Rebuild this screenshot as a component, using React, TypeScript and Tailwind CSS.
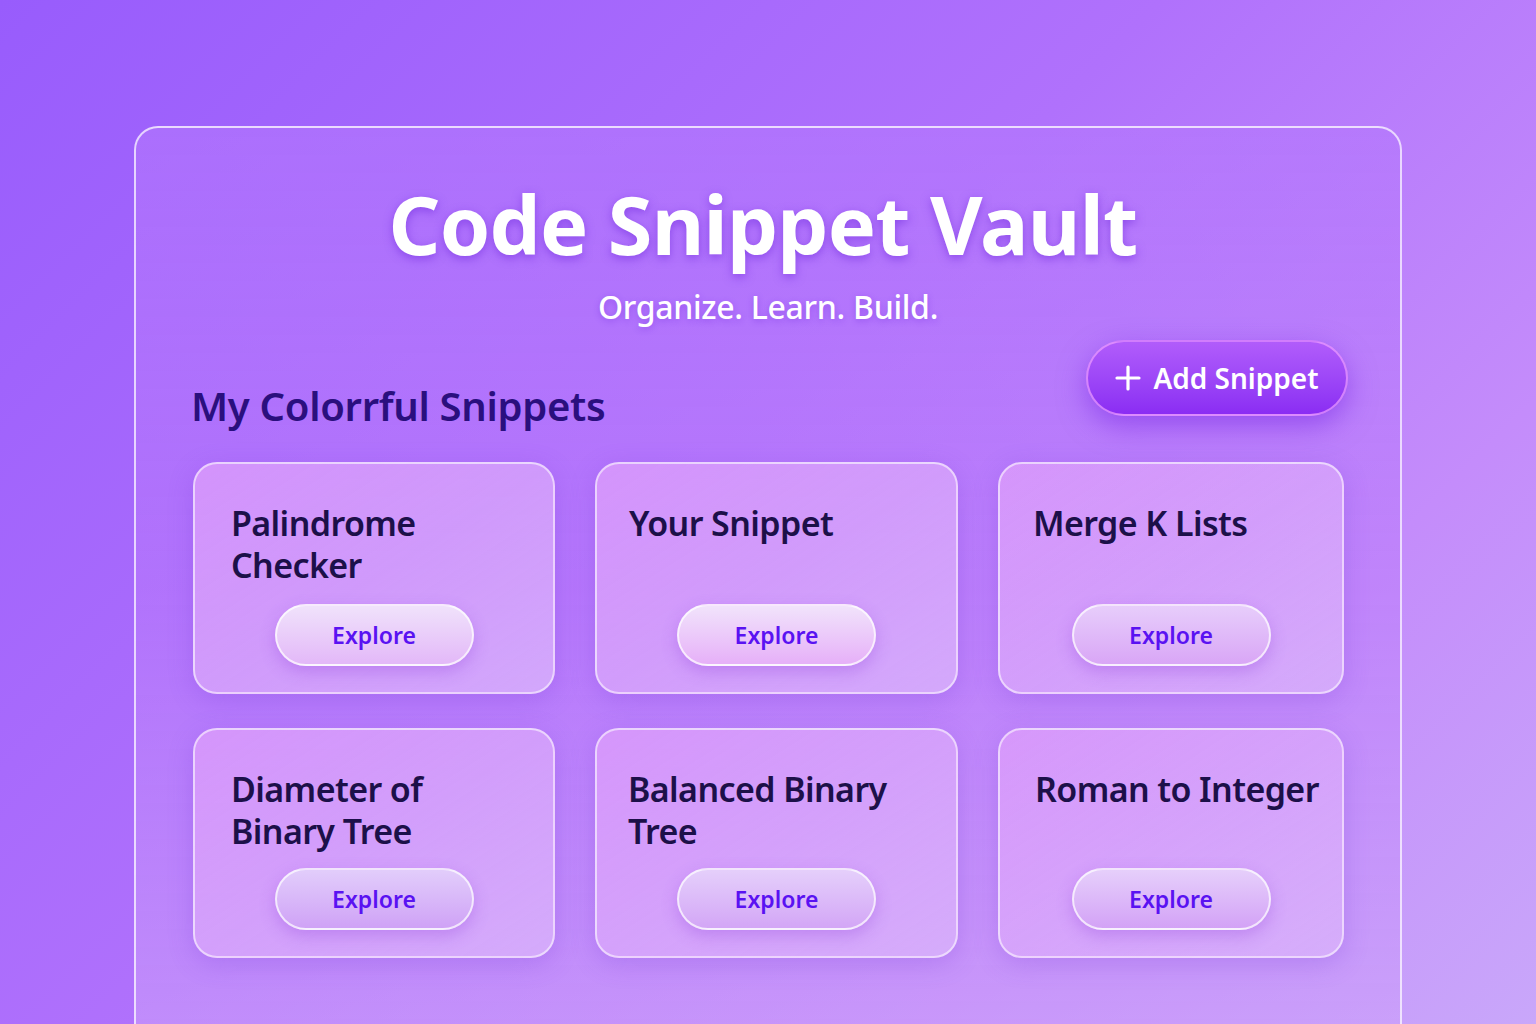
import React from "react";

const cards = [
  { lines: ["Palindrome", "Checker"], pl: "pl-[36px]", btn: "from-[#f0e2fb] to-[#e3b8f8]" },
  { lines: ["Your Snippet"], pl: "pl-[32px]", btn: "from-[#f1e3fb] to-[#e6b0f8]" },
  { lines: ["Merge K Lists"], pl: "pl-[33px]", btn: "from-[#e7cdfb] to-[#d9a6f6]" },
  { lines: ["Diameter of", "Binary Tree"], pl: "pl-[36px]", btn: "from-[#e2cdfb] to-[#cfa2f6]" },
  { lines: ["Balanced Binary", "Tree"], pl: "pl-[31px]", btn: "from-[#e5cffb] to-[#d3a6f6]" },
  { lines: ["Roman to Integer"], pl: "pl-[35px]", btn: "from-[#e6cffb] to-[#d3a2f6]" },
];

function Card({ c, top }: { c: (typeof cards)[number]; top: boolean }) {
  return (
    <div
      className={`relative flex flex-col rounded-[24px] border-2 border-white/55 bg-gradient-to-br from-[#dc9cfb]/80 via-[#dcaafb]/70 to-[#d9b2fb]/80 shadow-[0_6px_24px_rgba(120,60,220,0.25)] ${top ? "h-[232px]" : "h-[230px]"} ${c.pl} pr-[10px] pt-[38px]`}
    >
      <div className="whitespace-nowrap text-[34px] leading-[42px] font-semibold text-[#1c1049] tracking-[-0.6px]">
        {c.lines.map((l) => (
          <div key={l}>{l}</div>
        ))}
      </div>
      <div className="absolute left-0 right-0 bottom-[26px] flex justify-center">
        <button
          className={`h-[62px] w-[199px] rounded-full border-2 border-white/70 bg-gradient-to-b ${c.btn} text-[23px] font-semibold text-[#5a12f2] shadow-[0_6px_16px_rgba(140,60,220,0.3)]`}
        >
          Explore
        </button>
      </div>
    </div>
  );
}

export default function App() {
  return (
    <div
      className="min-h-[1024px] w-full overflow-hidden bg-[linear-gradient(135deg,#985cfc_0%,#b071fc_45%,#c48cfb_75%,#c9a8fa_100%)] pt-[126px]"
      style={{ fontFamily: '"Noto Sans", "Open Sans", sans-serif' }}
    >
      <div className="mx-[134px] h-[920px] rounded-t-[24px] border-2 border-b-0 border-white/70 bg-gradient-to-b from-[#b478fd]/60 via-[#bb7cfb]/50 to-[#cca0fa]/60 pt-[47px]">
        <h1 className="pr-[10px] text-center text-[81px] font-bold leading-[1.2] tracking-[-0.8px] text-white [text-shadow:0_3px_10px_rgba(110,40,220,0.55)]">
          Code Snippet Vault
        </h1>
        <p className="mt-[15px] text-center text-[32px] leading-[40px] font-medium text-white tracking-[-0.3px] [text-shadow:0_2px_6px_rgba(110,40,220,0.4)]">
          Organize. Learn. Build.
        </p>
        <div className="mt-[13px] flex items-start justify-between pl-[55px] pr-[52px]">
          <h2 className="mt-[40px] text-[40px] font-semibold leading-[52px] text-[#2a0f7e] tracking-[-0.3px]">
            My Colorrful Snippets
          </h2>
          <button className="flex h-[76px] w-[262px] items-center justify-center gap-[12px] rounded-full border-2 border-[#f0a0ff]/70 bg-gradient-to-b from-[#b15cfb] to-[#8b2cf3] text-[28px] font-semibold text-white shadow-[0_10px_28px_rgba(120,40,230,0.55)]">
            <svg width="26" height="26" viewBox="0 0 26 26" fill="none" stroke="white" strokeWidth="3.2" strokeLinecap="round">
              <path d="M13 2v22M2 13h22" />
            </svg>
            Add Snippet
          </button>
        </div>
        <div className="mt-[30px] grid grid-cols-[362px_363px_346px] gap-x-[40px] gap-y-[34px] pl-[57px]">
          {cards.map((c, i) => (
            <Card key={c.lines.join(" ")} c={c} top={i < 3} />
          ))}
        </div>
      </div>
    </div>
  );
}
